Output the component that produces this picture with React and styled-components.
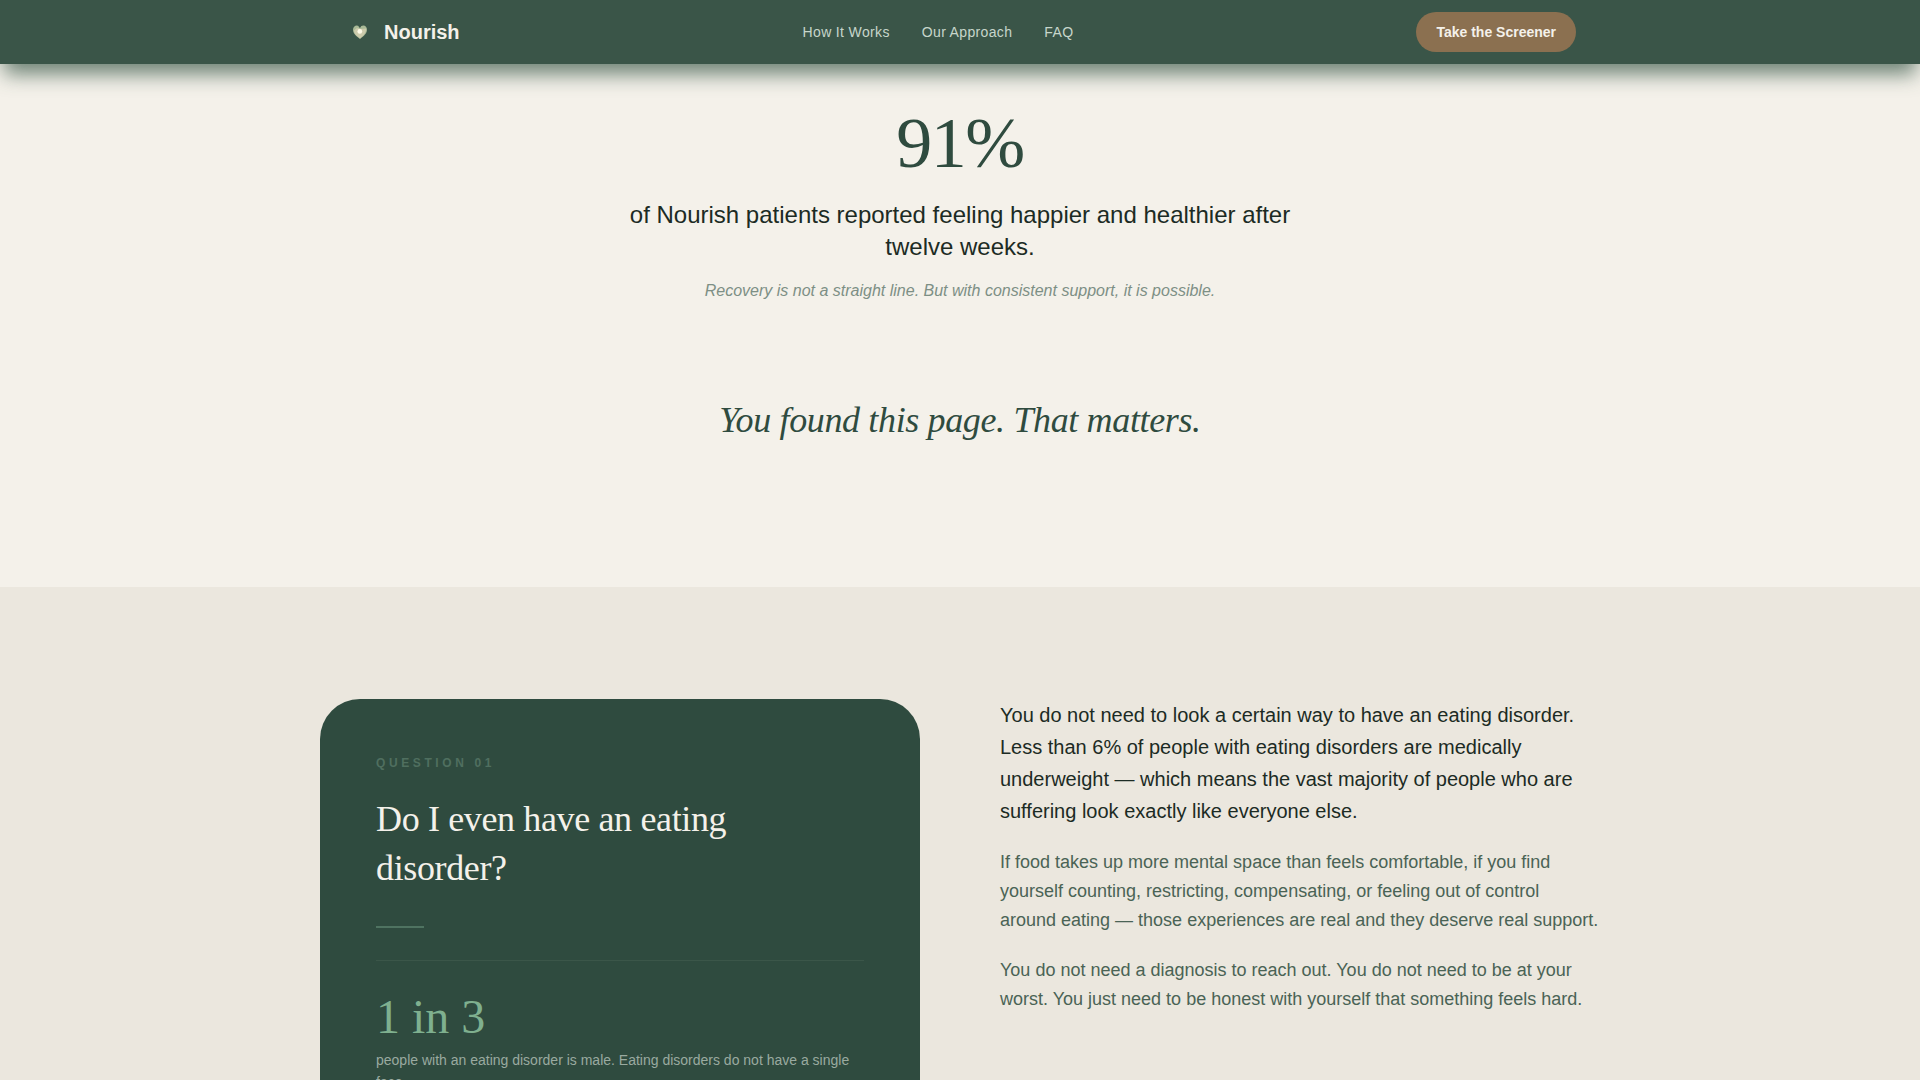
import styled, { createGlobalStyle } from 'styled-components';

const sans = "'Liberation Sans', Arial, sans-serif";
const serif = "'Liberation Serif', 'Times New Roman', serif";

const links = [
    { label: 'How It Works', href: '#how' },
    { label: 'Our Approach', href: '#approach' },
    { label: 'FAQ', href: '#faq' },
];

const HeartLogo = () => (
    <svg width="32" height="32" viewBox="0 0 32 32" aria-hidden="true">
        <path
            d="M16 23 C12 20 9 17.5 9 13.8 C9 11.2 10.8 9.6 12.8 9.6 C14.2 9.6 15.3 10.4 16 11.6 C16.7 10.4 17.8 9.6 19.4 9.6 C21.4 9.6 23 11.2 23 13.8 C23 17.5 20 20 16 23 Z"
            fill="#a9ba97"
        />
        <path
            d="M16 22.4 C12.4 19.8 10 17.4 10 14.4 L13 12 L17 13 L22 12.6 C22.4 17.4 19 20 16 22.4 Z"
            fill="#d6d0b2"
            opacity="0.8"
        />
        <circle cx="15.8" cy="15.4" r="2.4" fill="#fffbe9" />
        <path d="M16 12.2 L14.4 10 L17 9.4 Z" fill="#3a5548" />
    </svg>
);

const App = () => {
    return (
        <>
            <GlobalStyle />
            <Header>
                <HeaderInner>
                    <Brand href="#top">
                        <HeartLogo />
                        Nourish
                    </Brand>
                    <Nav>
                        {links.map((link) => (
                            <NavLink key={link.href} href={link.href}>
                                {link.label}
                            </NavLink>
                        ))}
                    </Nav>
                    <ScreenerButton type="button">Take the Screener</ScreenerButton>
                </HeaderInner>
            </Header>
            <main>
                <Intro>
                    <BigStat>91%</BigStat>
                    <StatText>
                        of Nourish patients reported feeling happier and healthier after twelve weeks.
                    </StatText>
                    <StatNote>
                        Recovery is not a straight line. But with consistent support, it is possible.
                    </StatNote>
                    <Quote>You found this page. That matters.</Quote>
                </Intro>
                <Questions>
                    <Columns>
                        <Card>
                            <Eyebrow>Question 01</Eyebrow>
                            <CardTitle>Do I even have an eating disorder?</CardTitle>
                            <Dash />
                            <CardStat>
                                <CardNumber>1 in 3</CardNumber>
                                <CardText>
                                    people with an eating disorder is male. Eating disorders do not have a
                                    single face.
                                </CardText>
                            </CardStat>
                        </Card>
                        <Answer>
                            <Paragraph $lead>
                                You do not need to look a certain way to have an eating disorder. Less than 6%
                                of people with eating disorders are medically underweight — which means the
                                vast majority of people who are suffering look exactly like everyone else.
                            </Paragraph>
                            <Paragraph>
                                If food takes up more mental space than feels comfortable, if you find
                                yourself counting, restricting, compensating, or feeling out of control around
                                eating — those experiences are real and they deserve real support.
                            </Paragraph>
                            <Paragraph>
                                You do not need a diagnosis to reach out. You do not need to be at your worst.
                                You just need to be honest with yourself that something feels hard.
                            </Paragraph>
                        </Answer>
                    </Columns>
                </Questions>
            </main>
        </>
    );
};

export default App;

const GlobalStyle = createGlobalStyle`
    *, *::before, *::after {
        box-sizing: border-box;
    }
    html {
        overflow-x: hidden;
        scrollbar-width: none;
    }
    body {
        margin: 0;
        background: #f4f1ea;
        color: #1c2b24;
        font-family: ${sans};
    }
    h2, p {
        margin: 0;
    }
`;

const Header = styled.header`
    position: sticky;
    top: 0;
    z-index: 10;
    background: #3a5548;
    box-shadow: 0 14px 20px -4px rgba(45, 78, 62, 0.68);
`;

const HeaderInner = styled.div`
    display: flex;
    align-items: center;
    justify-content: space-between;
    max-width: 1280px;
    min-height: 64px;
    margin: 0 auto;
    padding: 0 24px;
`;

const Brand = styled.a`
    display: flex;
    align-items: center;
    gap: 8px;
    color: #f4f1ea;
    font-size: 20px;
    font-weight: 700;
    text-decoration: none;
`;

const Nav = styled.nav`
    display: flex;
    gap: 32px;
`;

const NavLink = styled.a`
    color: #c7d6cb;
    font-size: 14px;
    line-height: 20px;
    letter-spacing: 0.025em;
    text-decoration: none;
`;

const ScreenerButton = styled.button`
    padding: 10px 20px;
    border: none;
    border-radius: 20px;
    background: #8b7050;
    color: #f4f1ea;
    font-family: inherit;
    font-size: 14px;
    font-weight: 700;
    line-height: 20px;
    cursor: pointer;
`;

const Intro = styled.section`
    display: flex;
    flex-direction: column;
    align-items: center;
    padding: 43px 24px 144px;
    text-align: center;
`;

const BigStat = styled.p`
    margin-bottom: 20px;
    color: #2f4b3f;
    font-family: ${serif};
    font-size: 72px;
    line-height: 72px;
    letter-spacing: -0.02em;
`;

const StatText = styled.p`
    max-width: 672px;
    margin-bottom: 16px;
    font-size: 24px;
    line-height: 32px;
`;

const StatNote = styled.p`
    color: #7d8f85;
    font-size: 16px;
    font-style: italic;
    line-height: 24px;
`;

const Quote = styled.p`
    margin-top: 94px;
    color: #2f4b3f;
    font-family: ${serif};
    font-size: 36px;
    font-style: italic;
    line-height: 46px;
    letter-spacing: -0.01em;
`;

const Questions = styled.section`
    padding: 112px 24px;
    background: #ebe7de;
`;

const Columns = styled.div`
    display: grid;
    grid-template-columns: 1fr 1fr;
    gap: 80px;
    max-width: 1280px;
    margin: 0 auto;
`;

const Card = styled.article`
    padding: 56px;
    border-radius: 40px;
    background: #2f4b3f;
`;

const Eyebrow = styled.p`
    margin-bottom: 24px;
    color: #4f6f5f;
    font-size: 12px;
    font-weight: 700;
    line-height: 16px;
    letter-spacing: 0.3em;
    text-transform: uppercase;
`;

const CardTitle = styled.h2`
    margin-bottom: 33px;
    color: #f4f1ea;
    font-family: ${serif};
    font-size: 36px;
    font-weight: 400;
    line-height: 49px;
    letter-spacing: -0.01em;
`;

const Dash = styled.div`
    width: 48px;
    height: 2px;
    margin-bottom: 32px;
    background: #4f7361;
`;

const CardStat = styled.div`
    padding-top: 32px;
    border-top: 1px solid #3b5649;
`;

const CardNumber = styled.p`
    margin-bottom: 8px;
    color: #7fb08f;
    font-family: ${serif};
    font-size: 48px;
    line-height: 48px;
`;

const CardText = styled.p`
    color: #9aaaa0;
    font-size: 14px;
    line-height: 22px;
`;

const Answer = styled.div`
    display: flex;
    flex-direction: column;
    gap: 21px;
`;

const Paragraph = styled.p`
    color: ${({ $lead }) => ($lead ? '#1c2b24' : '#4a6355')};
    font-size: ${({ $lead }) => ($lead ? '20px' : '18px')};
    line-height: ${({ $lead }) => ($lead ? '32px' : '29px')};
`;
